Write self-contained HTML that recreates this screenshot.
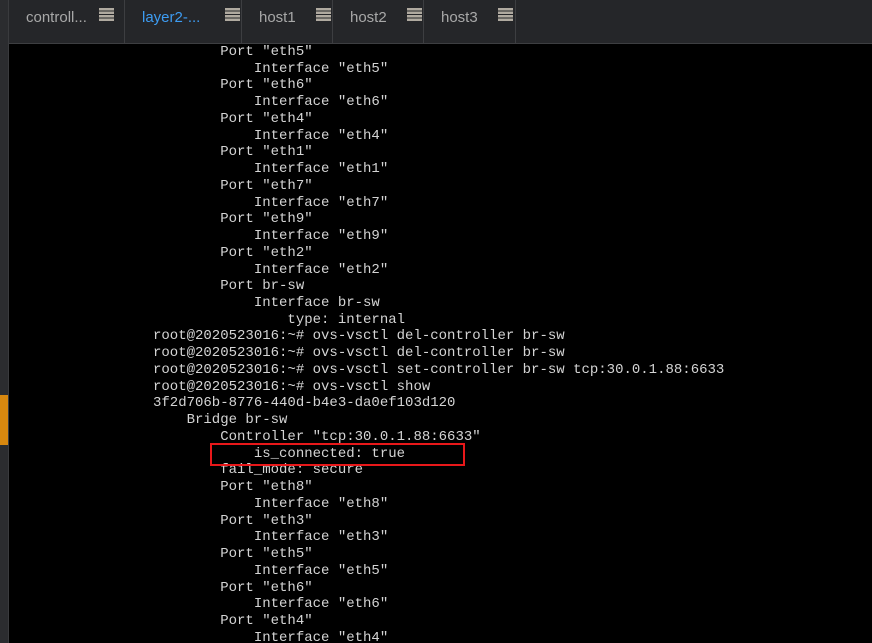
<!DOCTYPE html><html style="overflow:hidden;height:643px"><head><style>
html,body{overflow:hidden}
body{margin:0;width:872px;height:643px;background:#000;position:relative;font-family:"Liberation Sans",sans-serif}
#left{position:absolute;left:0;top:0;width:8px;height:643px;background:#2b2c2f;border-right:1px solid #3a3b3e}
#handle{position:absolute;left:0;top:395px;width:8px;height:50px;background:#d8880f}
#tabs{position:absolute;left:9px;top:0;width:863px;height:43px;background:#252629;border-bottom:1px solid #3d3e41}
.tab{position:absolute;top:0;height:43px;border-right:1px solid #3d3e41;font-size:15px;color:#a8a8a8;line-height:36px}
.tab span{position:absolute;top:0}
.ham{position:absolute;top:8px;width:15px;height:13px;background:repeating-linear-gradient(#b0aaa0 0 2.5px,transparent 2.5px 3.5px)}
pre{position:absolute;left:153px;top:44px;margin:0;font-family:"Liberation Mono",monospace;font-size:14px;line-height:16.74px;color:#d4d4d4}
#box{position:absolute;left:210px;top:443px;width:251px;height:19px;border:2px solid #e8181a}
</style></head><body>
<div id="left"><div id="handle"></div></div>
<div id="tabs">
<div class="tab" style="left:0;width:115px"><span style="left:17px">controll...</span><div class="ham" style="left:90px"></div></div>
<div class="tab" style="left:116px;width:116px"><span style="left:17px;color:#3d9cf2">layer2-...</span><div class="ham" style="left:100px"></div></div>
<div class="tab" style="left:233px;width:90px"><span style="left:17px">host1</span><div class="ham" style="left:74px"></div></div>
<div class="tab" style="left:324px;width:90px"><span style="left:17px">host2</span><div class="ham" style="left:74px"></div></div>
<div class="tab" style="left:415px;width:91px"><span style="left:17px">host3</span><div class="ham" style="left:74px"></div></div>
</div>
<pre>        Port "eth5"
            Interface "eth5"
        Port "eth6"
            Interface "eth6"
        Port "eth4"
            Interface "eth4"
        Port "eth1"
            Interface "eth1"
        Port "eth7"
            Interface "eth7"
        Port "eth9"
            Interface "eth9"
        Port "eth2"
            Interface "eth2"
        Port br-sw
            Interface br-sw
                type: internal
root@2020523016:~# ovs-vsctl del-controller br-sw
root@2020523016:~# ovs-vsctl del-controller br-sw
root@2020523016:~# ovs-vsctl set-controller br-sw tcp:30.0.1.88:6633
root@2020523016:~# ovs-vsctl show
3f2d706b-8776-440d-b4e3-da0ef103d120
    Bridge br-sw
        Controller "tcp:30.0.1.88:6633"
            is_connected: true
        fail_mode: secure
        Port "eth8"
            Interface "eth8"
        Port "eth3"
            Interface "eth3"
        Port "eth5"
            Interface "eth5"
        Port "eth6"
            Interface "eth6"
        Port "eth4"
            Interface "eth4"</pre>
<div id="box"></div>
</body></html>
